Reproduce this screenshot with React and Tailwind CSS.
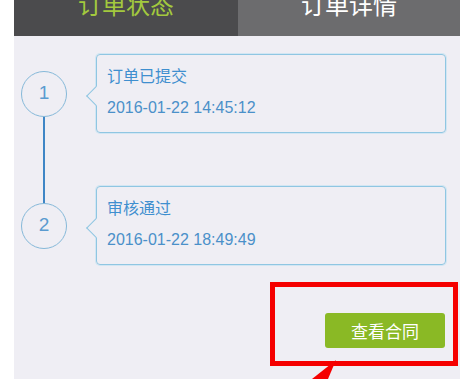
const steps = [
  { id: 1, title: '订单已提交', time: '2016-01-22 14:45:12' },
  { id: 2, title: '审核通过', time: '2016-01-22 18:49:49' },
];

function StepCard({ step }) {
  return (
    <div className="relative ml-[29px] h-[79px] w-[350px] rounded-[4px] border border-[#8fc6e2] px-[10px] shadow-[0_0_0_1px_rgba(190,225,242,0.6)]">
      <span className="absolute left-[-8px] top-[34px] h-[14px] w-[14px] rotate-45 border-b border-l border-[#8fc6e2] bg-[#efeef4]" />
      <p className="mt-[9px] text-[16px] leading-[22px] text-[#3f8fcf]">{step.title}</p>
      <p
        className="mt-[11px] text-[16px] leading-[22px] text-[#4a90c9]"
        style={{ fontFamily: '"Liberation Sans", Arial, sans-serif' }}
      >
        {step.time}
      </p>
    </div>
  );
}

function StepCircle({ n }) {
  return (
    <div
      className="relative flex h-[46px] w-[46px] items-center justify-center rounded-full border border-[#86b9d9] bg-[#efeef4] text-[19px] text-[#5b9bd0]"
      style={{ fontFamily: '"Liberation Sans", Arial, sans-serif' }}
    >
      {n}
    </div>
  );
}

export default function App() {
  return (
    <div
      className="relative h-[379px] w-[474px] overflow-hidden bg-white"
      style={{ fontFamily: '"Noto Sans CJK SC", "Noto Sans", sans-serif' }}
    >
      <div className="mx-[14px] h-[379px] w-[446px] bg-[#efeef4]">
        <div className="flex h-[36px] overflow-hidden">
          <div className="flex w-[224px] justify-center bg-[#4b4b4d]">
            <span className="-mt-[10px] text-[24px] leading-[28px] text-[#a3c93e]">订单状态</span>
          </div>
          <div className="flex flex-1 justify-center bg-[#6c6c6e]">
            <span className="-mt-[10px] text-[24px] leading-[28px] text-white">订单详情</span>
          </div>
        </div>

        <div className="relative pt-[18px]">
          <div className="absolute left-[29px] top-[80px] h-[90px] w-[1.5px] bg-[#3f86c6]" />
          <div className="flex items-center">
            <div className="ml-[7px]"><StepCircle n={1} /></div>
            <StepCard step={steps[0]} />
          </div>
          <div className="mt-[53px] flex items-center">
            <div className="ml-[7px]"><StepCircle n={2} /></div>
            <StepCard step={steps[1]} />
          </div>
        </div>

        <div className="mt-[48px] flex justify-end pr-[15px]">
          <button className="h-[35px] w-[120px] rounded-[3px] bg-[#8ab925] text-[17px] text-white">
            查看合同
          </button>
        </div>
      </div>

      <div className="absolute left-[270px] top-[282px] h-[84px] w-[188px] border-[5px] border-[#f50000]" />
      <svg className="absolute left-[300px] top-[360px]" width="40" height="19" viewBox="0 0 40 19">
        <polygon points="36,0 12,19 28,19" fill="#f50000" />
      </svg>
    </div>
  );
}
